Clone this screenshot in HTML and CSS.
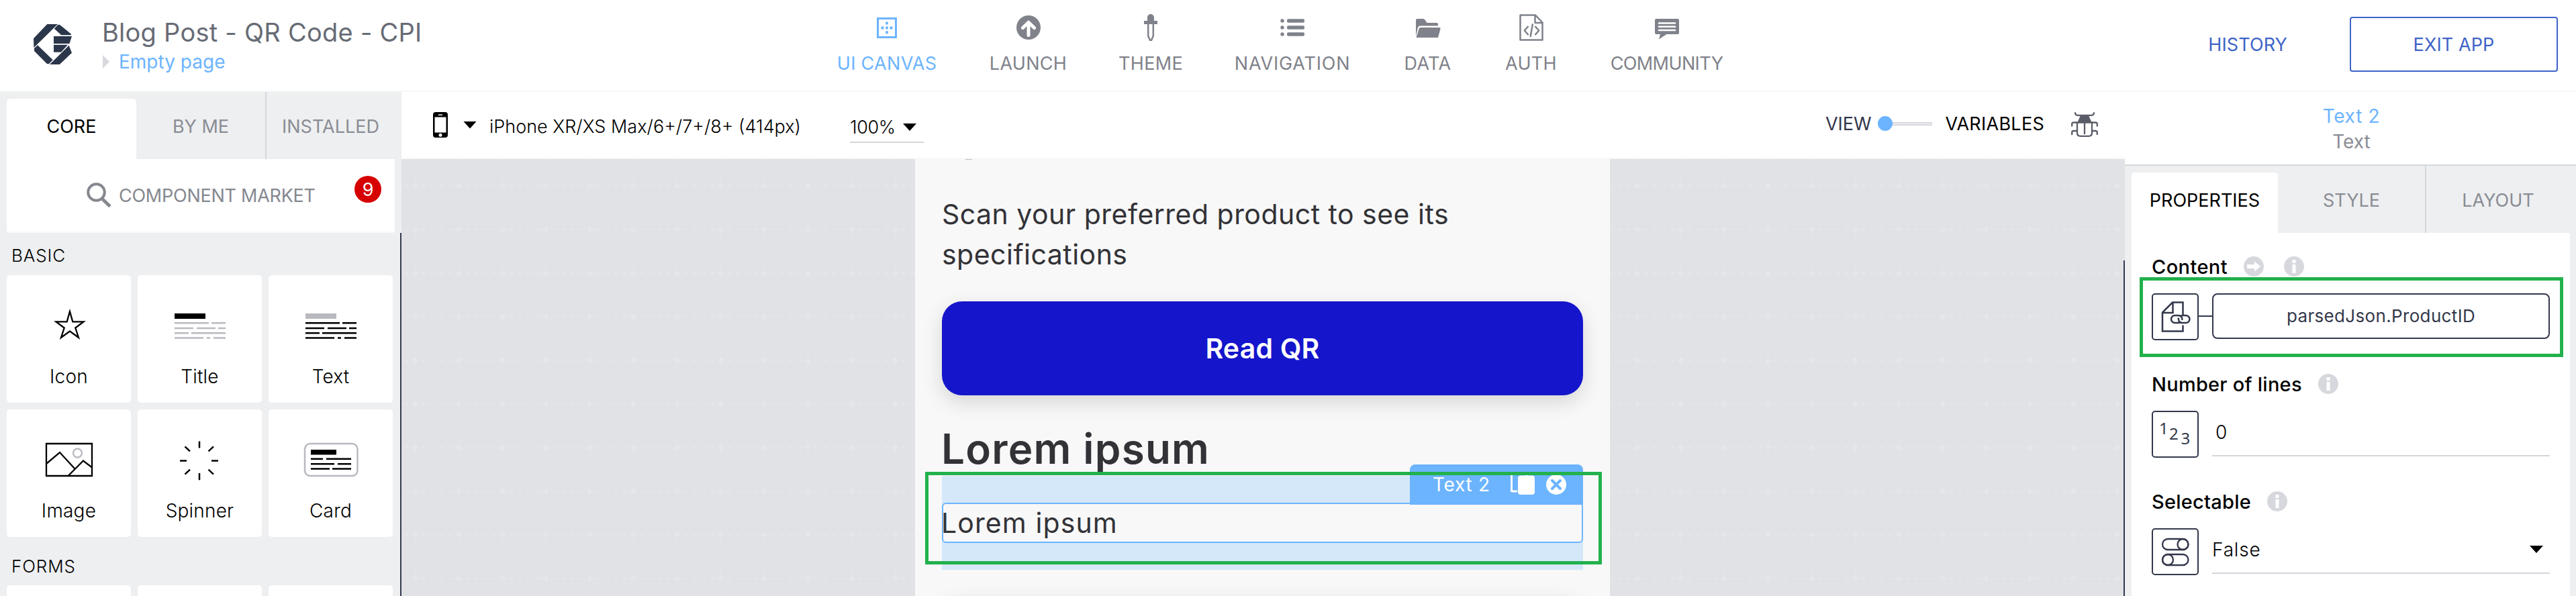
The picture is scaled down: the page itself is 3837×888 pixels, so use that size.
FILE: index.html
```
<!DOCTYPE html>
<html lang="en">
<head>
<meta charset="utf-8">
<title>Composer</title>
<link rel="stylesheet" href="styles.css">
</head>
<body>
<header class="topbar">
  <div class="brand">
    <svg class="logo" width="57" height="60" viewBox="0 0 57 60" fill="#2b364a"><path d="M20.3 0H36L.4 35 0 21.3z"/><path d="M30.8 6.700 36 1.200q1.500-1 3.500 0L56 14.700l-.4 1.600H41.300z"/><path d="M30 18h27l-3.500 11H30zM30 30.700h21L41 41.700H30z"/><path d="M52.700 31.700 57 42.700 38.800 60H24z"/><path d="M6 31.300 28.700 53.300 23 59q-1.600.8-3.600-.6L1 40v-4z"/></svg>
    <div class="brand-text">
      <div class="app-name">Blog Post - QR Code - CPI</div>
      <div class="page-name"><i class="crumb"></i><span>Empty page</span></div>
    </div>
  </div>
  <nav class="nav">
    <a class="nav-item active"><svg width="40" height="40" viewBox="0 0 40 40"><path fill="none" stroke="currentColor" stroke-width="3" d="M6.500 6.500h27v28h-27z"/><path fill="currentColor" d="M18.200 11.500h3.600v4h-3.600zM18.200 18.500h3.600v4h-3.600zM18.200 25.200h3.600v4h-3.600zM11.500 18.500h4v4h-4zM24.500 18.500h4v4h-4z"/></svg><span class="t3">UI CANVAS</span></a>
    <a class="nav-item"><svg width="40" height="40" viewBox="0 0 40 40"><circle cx="20" cy="20" r="18" fill="currentColor"/><path d="M20 31.500V13M11.500 20.500 20 12.200l8.500 8.300" fill="none" stroke="#fff" stroke-width="5" stroke-linecap="round" stroke-linejoin="round"/></svg><span class="t3">LAUNCH</span></a>
    <a class="nav-item"><svg width="40" height="40" viewBox="0 0 40 40"><path fill="currentColor" d="M15 10V5a5 5 0 0 1 10 0v5h5v5H10v-5z"/><path d="M16.200 15v17.500L19 39h2l2.800-6.500V15" fill="none" stroke="currentColor" stroke-width="2.500"/></svg><span class="t3">THEME</span></a>
    <a class="nav-item"><svg width="40" height="40" viewBox="0 0 40 40" fill="currentColor"><circle cx="5" cy="10" r="2.700"/><circle cx="5" cy="20" r="2.700"/><circle cx="5" cy="30" r="2.700"/><rect x="12" y="7.300" width="26" height="5.400" rx="2"/><rect x="12" y="17.300" width="26" height="5.400" rx="2"/><rect x="12" y="27.300" width="26" height="5.400" rx="2"/></svg><span class="t8">NAVIGATION</span></a>
    <a class="nav-item"><svg width="40" height="40" viewBox="0 0 40 40" fill="currentColor"><path d="M2 33V9q0-2 2-2h9q1.500 0 2.500 1.500l3 4.500H33q2 0 2 2v2.500H8q-2.500 0-3 2.500z"/><path d="M8.500 20H37q2 0 1.500 2l-3.500 13H2.500L6.700 21.500Q7 20 8.500 20z"/></svg><span class="t3">DATA</span></a>
    <a class="nav-item"><svg width="40" height="40" viewBox="0 0 40 40" fill="none" stroke="currentColor" stroke-width="2.500" stroke-linejoin="round"><path d="M3.500 1.500H26l10.500 11v26h-33zM25.500 1.500V13h11"/><path d="M15.500 18 9.800 24.500l5.700 6.500M25.500 18l5.700 6.500-5.700 6.500M22 14.500 18.500 34"/></svg><span class="t3">AUTH</span></a>
    <a class="nav-item"><svg width="40" height="40" viewBox="0 0 40 40"><path fill="currentColor" d="M4 7h32q2 0 2 2v19q0 2-2 2H19.500L8 37.500 10 30H4q-2 0-2-2V9q0-2 2-2z"/><path d="M8 13.500h24M8 18.800h24M8 24h24" stroke="#fff" stroke-width="2.600" stroke-linecap="round"/></svg><span class="t-6">COMMUNITY</span></a>
  </nav>
  <div class="actions"><a class="history">HISTORY</a><a class="exit">EXIT APP</a></div>
</header>

<main class="main">
  <aside class="library">
    <div class="tabs left-tabs"><div class="tab on">CORE</div><div class="tab">BY ME</div><div class="tab sep">INSTALLED</div></div>
    <div class="market">
      <svg width="38" height="38" viewBox="0 0 38 38" fill="none" stroke="#85888f"><circle cx="14.500" cy="14.500" r="12.300" stroke-width="4"/><path d="M23 24 35 35.500" stroke-width="5"/></svg>
      <span>COMPONENT MARKET</span><b class="badge">9</b>
    </div>
    <div class="lists">
      <h3 class="group">BASIC</h3>
      <div class="grid">
        <div class="comp"><svg width="185" height="130" viewBox="0 0 185 130"><path d="M94 54 98.300 69.400H114.500L102.300 78.500 107 93 94 83.500 81 93 85.700 78.500 73.500 69.400H89.700z" fill="none" stroke="#000" stroke-width="2.300"/></svg><span>Icon</span></div>
        <div class="comp"><svg width="185" height="130" viewBox="0 0 185 130"><path d="M55 57h46v8H55z"/><path d="M55 71.200h51m4 0h21M55 79h28m5 0h28m4 0h11M55 86.200h21m4 0h51M55 93.600h43m5 0h5m5 0h18" stroke="#b9bac0" stroke-width="2.500"/></svg><span>Title</span></div>
        <div class="comp"><svg width="185" height="130" viewBox="0 0 185 130"><path fill="#b9bac0" d="M55 57h46v8H55z"/><path d="M55 71.200h51m4 0h21M55 79h28m5 0h28m4 0h11M55 86.200h21m4 0h51M55 93.600h43m5 0h5m5 0h18" stroke="#000" stroke-width="2.500"/></svg><span>Text</span></div>
        <div class="comp"><svg width="185" height="130" viewBox="0 0 185 130" fill="none" stroke="#000" stroke-width="2.300"><circle cx="105.500" cy="65" r="6.500" stroke="#b9bac0"/><path d="M59 51h68v48H59zM59 81l20-17 22.500 24.500M92 98.500 114 76.500l13 10"/></svg><span>Image</span></div>
        <div class="comp"><svg width="185" height="130" viewBox="0 0 185 130"><path d="M92 47.400v10.200M92 95v10.200M63 76.600h10M110 76.600h10M70.500 55.300l7.500 7M113 55.300l-7.500 7M70.500 96.600l7.500-7M113 96.600l-7.500-7" stroke="#000" stroke-width="2.500"/></svg><span>Spinner</span></div>
        <div class="comp"><svg width="185" height="130" viewBox="0 0 185 130"><rect x="54" y="51" width="78.500" height="48" rx="8" fill="none" stroke="#b9bac0" stroke-width="2.500"/><path d="M63 60h38v7.600H63z"/><path d="M63 73.700h18m5 0h37M63 81.300h35m5 0h20M63 88.600h28m4 0h28" stroke="#000" stroke-width="2.500"/></svg><span>Card</span></div>
      </div>
      <h3 class="group forms">FORMS</h3>
      <div class="grid"><div class="comp"></div><div class="comp"></div><div class="comp"></div></div>
    </div>
  </aside>

  <section class="stage">
    <div class="toolbar">
      <svg class="phone" width="22" height="38" viewBox="0 0 22 38"><rect width="22" height="38" rx="4"/><path fill="#fff" d="M2.500 7.500h17v23h-17z"/><path d="M8 4.200h6" stroke="#fff" stroke-width="1.500"/><circle cx="11" cy="34.200" r="2.500" fill="#fff"/></svg>
      <i class="caret"></i>
      <span class="device">iPhone XR/XS Max/6+/7+/8+ (414px)</span>
      <span class="zoom"><span class="zoom-value">100%</span><i class="caret"></i></span>
      <span class="view">VIEW</span>
      <span class="toggle"><i class="knob"></i><i class="track"></i></span>
      <span class="variables">VARIABLES</span>
      <svg class="bug" width="40" height="38" viewBox="0 0 40 38" fill="none" stroke="#5a5d68" stroke-width="2.300"><path d="M6 .3v1Q6.500 4.800 10 4.800H30Q33.500 4.800 34 1.300v-1"/><path d="M14 5h12l5 11H9z" fill="#5a5d68" stroke="none"/><path d="M9 15.500h22V31q0 4.800-5 4.800H14q-5 0-5-4.800zM20 15.500V33"/><path d="M1.200 21.500V18q0-2.500 2.500-2.500H9M1.200 34v-3.500Q1.200 28 3.700 28H9M38.800 21.500V18q0-2.500-2.500-2.500H31M38.800 34v-3.500q0-2.500-2.500-2.500H31"/></svg>
    </div>
    <div class="canvas">
      <svg class="dots" width="2567" height="651"><defs><pattern id="g" x="-12" y="7.500" width="65" height="65" patternUnits="userSpaceOnUse"><g fill="none" stroke="#e7e7ea"><path d="M-9.500 32.500H65" stroke-width="1.800" stroke-dasharray="6 7"/><path d="M32.500-9.500V65" stroke-width="1" stroke-dasharray="6 7"/><path d="M28 32.500h9M32.500 28v9" stroke-width="2.500"/></g></pattern></defs><rect width="2567" height="651" fill="url(#g)"/></svg>
      <div class="screen">
        <i class="cutoff"></i>
        <p class="intro">Scan your preferred product to see its<br>specifications</p>
        <div class="button">Read QR</div>
        <h1 class="heading">Lorem ipsum</h1>
        <div class="selected">
          <div class="field-text">Lorem ipsum</div>
          <div class="tag"><span>Text 2</span>
            <svg width="36" height="36" viewBox="0 0 36 36"><path d="M1.500 29V2.500h22.500V6M1.500 28H10" fill="none" stroke="#fff" stroke-width="3"/><rect x="11" y="4.500" width="25" height="28.500" rx="4" fill="#fff"/></svg>
            <svg width="30" height="30" viewBox="0 0 30 30"><circle cx="15" cy="15" r="15" fill="#fff"/><path d="m9 9 12 12M21 9 9 21" stroke="#6cb4fe" stroke-width="4" stroke-linecap="round"/></svg>
          </div>
          <i class="mark mark-canvas"></i>
        </div>
        <div class="button next"></div>
      </div>
      <i class="divider"></i>
    </div>
  </section>

  <aside class="inspector">
    <div class="subject"><div class="subject-name">Text 2</div><div class="subject-type">Text</div></div>
    <div class="tabs right-tabs"><div class="tab on">PROPERTIES</div><div class="tab">STYLE</div><div class="tab sep">LAYOUT</div></div>
    <div class="props">
      <div class="prop">
        <div class="label content"><span>Content</span><svg width="30" height="30" viewBox="0 0 30 30"><circle cx="15" cy="15" r="15" fill="#d7d8dd"/><path fill="#fff" d="M5 12h11V7.500l9 7.500-9 7.500V18H5z"/></svg><svg class="second" width="30" height="30" viewBox="0 0 30 30"><circle cx="15" cy="15" r="15" fill="#d7d8dd"/><path fill="#fff" d="M12.500 5h5v5h-5zM12.500 12h5v13h-5z"/></svg></div>
        <div class="control">
          <div class="kind"><svg width="70" height="70" viewBox="0 0 70 70" fill="none" stroke="#33384b" stroke-width="2.500"><path d="M46.500 32V13.500H31L16 28.500v28h30.500V47.500M31.500 13.500v15.500H16"/><path d="M43 42.500q-1.500 1.500-3.500 1.500h-5a5.500 5.500 0 0 1 0-11H40a5.500 5.500 0 0 1 5.300 7"/><path d="M42 34.500q1.500-1.500 3.500-1.500h5.500a5.500 5.500 0 0 1 0 11h-5.500a5.500 5.500 0 0 1-5.300-7.500"/></svg></div>
          <i class="link"></i><div class="binding">parsedJson.ProductID</div>
        </div>
        <i class="mark mark-prop"></i>
      </div>
      <div class="prop">
        <div class="label lines"><span>Number of lines</span><svg width="30" height="30" viewBox="0 0 30 30"><circle cx="15" cy="15" r="15" fill="#d7d8dd"/><path fill="#fff" d="M12.500 5h5v5h-5zM12.500 12h5v13h-5z"/></svg></div>
        <div class="control">
          <div class="kind"><svg class="digits" width="70" height="70" viewBox="0 0 70 70"><text x="11" y="35">1</text><text x="26" y="43">2</text><text x="43.500" y="50">3</text></svg></div>
          <div class="input number">0</div>
        </div>
      </div>
      <div class="prop">
        <div class="label"><span>Selectable</span><svg width="30" height="30" viewBox="0 0 30 30"><circle cx="15" cy="15" r="15" fill="#d7d8dd"/><path fill="#fff" d="M12.500 5h5v5h-5zM12.500 12h5v13h-5z"/></svg></div>
        <div class="control">
          <div class="kind"><svg width="70" height="70" viewBox="0 0 70 70" fill="none" stroke="#33384b" stroke-width="2.300"><rect x="16" y="16" width="38.500" height="16" rx="8"/><circle cx="46.500" cy="24" r="8"/><rect x="16" y="39" width="38.500" height="16" rx="8"/><circle cx="24" cy="47" r="8"/></svg></div>
          <div class="input"><span>False</span><i class="caret"></i></div>
        </div>
      </div>
    </div>
  </aside>
</main>
</body>
</html>
```
FILE: styles.css
```
* { box-sizing: border-box; margin: 0; padding: 0; }
body {
  width: 3837px;
  height: 888px;
  overflow: hidden;
  background: #fff;
  color: #000;
  font-family: Inter, "Liberation Sans", sans-serif;
  font-size: 27px;
  white-space: nowrap;
}
svg { display: block; flex: none; }
i { display: block; flex: none; }

/* Top bar */
.topbar { display: flex; height: 137px; border-bottom: 2px solid #f7f8f8; }
.brand { display: flex; width: 1248px; padding: 26px 0 0 50px; }
.logo { margin: 10px 45px 0 0; }
.app-name { font-size: 38px; line-height: 44px; color: #676b75; letter-spacing: .25px; }
.page-name { display: flex; align-items: center; gap: 14px; font-size: 28px; line-height: 44px; color: #6cb4fe; }
.crumb { border: 10px solid transparent; border-left-color: #d7d9dd; border-right: 0; margin-left: 1px; }
.nav {
  display: grid;
  grid-template-columns: 146px 111px 90px 168px 71px 73px 167px;
  column-gap: 82px;
  padding-top: 21px;
  color: #7f828a;
}
.nav-item { display: flex; flex-direction: column; align-items: center; gap: 17px; line-height: 34px; }
.nav-item.active { color: #6cb4fe; }
.t3 { letter-spacing: .3px; }
.t8 { letter-spacing: .8px; }
.t-6 { letter-spacing: -.6px; }
.actions { display: flex; align-items: center; margin-left: auto; padding: 0 27px 3px 0; color: #3e64c8; letter-spacing: .1px; }
.history { margin-right: 93px; }
.exit { width: 310px; height: 82px; border: 2px solid #3e64c8; border-radius: 4px; line-height: 79px; text-align: center; }

.main { display: flex; height: 751px; }

/* Tabs */
.tabs { display: flex; height: 100px; padding-left: 10px; background: #eeeff1; color: #8a8d94; line-height: 24px; text-align: center; }
.tab { padding-top: 40px; }
.tab.on { margin-top: 10px; padding-top: 30px; background: #fff; color: #000; border-radius: 5px 5px 0 0; }
.tab.sep { border-left: 2px solid #d5d8da; }
.left-tabs .tab { width: 192px; }
.left-tabs .tab.on, .left-tabs .tab.sep { width: 193px; }
.right-tabs .tab { width: 219px; }
.right-tabs .tab.on { width: 218px; }
.right-tabs .tab.sep { width: 216px; }

/* Component library */
.library { width: 598px; background: #eeeff1; }
.market {
  position: relative;
  display: flex;
  align-items: center;
  gap: 10px;
  width: 578px;
  height: 110px;
  margin-left: 10px;
  padding-left: 119px;
  border-bottom: 2px solid #f7f8f8;
  background: #fff;
  color: #85888f;
  letter-spacing: -.25px;
}
.badge {
  position: absolute;
  left: 518px;
  top: 25px;
  width: 40px;
  height: 40px;
  border-radius: 50%;
  background: #d60000;
  color: #fff;
  font-size: 27px;
  font-weight: 400;
  line-height: 42px;
  text-align: center;
}
.lists { height: 541px; border-right: 2px solid #333a4f; overflow: hidden; }
.group { height: 63px; padding-left: 17px; font-size: 26px; font-weight: 300; line-height: 67px; letter-spacing: .9px; }
.forms { height: 72px; line-height: 87px; }
.grid { display: grid; grid-template-columns: repeat(3, 185px); grid-auto-rows: 190px; gap: 10px; padding-left: 10px; }
.comp { border-radius: 5px; background: #fff; font-size: 28px; font-weight: 300; line-height: 30px; text-align: center; letter-spacing: .2px; }
.comp span { display: block; margin-top: 6px; }

/* Stage */
.stage { width: 2567px; }
.toolbar { display: flex; align-items: center; height: 100px; padding: 0 40px 0 47px; border-bottom: 2px solid #f7f8f8; }
.caret { width: 20px; height: 11px; background: #000; clip-path: polygon(0 0, 100% 0, 50% 100%); }
.phone { margin-right: 23px; }
.device { width: 537px; margin: 4px 0 0 19px; font-size: 27px; font-weight: 300; letter-spacing: 0; }
.zoom { display: flex; align-items: center; justify-content: space-between; width: 110px; height: 44px; margin-top: 9px; padding: 0 11px 0 0; border-bottom: 2px solid #d5d6dc; font-size: 27px; font-weight: 300; letter-spacing: -.4px; }
.view { margin: -3px 10px 0 auto; color: #33384b; letter-spacing: -.1px; }
.toggle { display: flex; align-items: center; width: 81px; margin-top: -4px; }
.knob { width: 22px; height: 22px; border-radius: 50%; background: #6cb4fe; }
.track { width: 59px; height: 5px; border: 1px solid #d5d6dc; border-width: 2px 1px; }
.variables { margin: -3px 40px 0 19px; letter-spacing: .27px; }
.canvas { position: relative; height: 651px; overflow: hidden; background: #e1e2e6; }
.dots { position: absolute; inset: 0; }
.divider { position: absolute; right: 0; top: 151px; width: 2px; height: 500px; background: #333a4f; }
.screen { position: relative; width: 1035px; height: 651px; margin-left: 765px; padding: 52px 40px 0; background: #f8f8f8; color: #323237; overflow: hidden; }
.cutoff { position: absolute; left: 75px; top: 0; width: 10px; height: 1px; background: #bdbdc0; }
.intro { font-size: 41px; line-height: 60px; letter-spacing: .48px; }
.button { height: 140px; margin-top: 40px; border-radius: 30px; background: #1515cc; box-shadow: 0 10px 30px rgba(0, 0, 0, .14); color: #fff; font-size: 41px; font-weight: 600; line-height: 140px; text-align: center; letter-spacing: .2px; }
.heading { margin-top: 40px; font-size: 62px; font-weight: 600; line-height: 80px; letter-spacing: 1.2px; margin-left: -1px; }
.selected { position: relative; height: 140px; padding: 40px 0; background: #d5e8fa; }
.field-text { height: 60px; border: 2px solid #6cb4fe; border-radius: 6px; background: #f8f8f8; font-size: 41px; line-height: 56px; letter-spacing: 1.1px; text-indent: -3px; }
.tag {
  position: absolute;
  right: 0;
  top: -17px;
  display: flex;
  align-items: center;
  width: 258px;
  height: 60px;
  padding-left: 34px;
  border-radius: 8px 8px 0 0;
  background: #6cb4fe;
  color: #fff;
  font-size: 28px;
  letter-spacing: .7px;
}
.tag span { width: 116px; }
.tag svg + svg { margin-left: 17px; }
.next { margin-top: 40px; }
.mark { position: absolute; border: 5px solid #22b14c; }
.mark-canvas { left: -25px; top: -6px; width: 1008px; height: 138px; }

/* Inspector */
.inspector { width: 672px; background: #eeeff1; }
.subject { height: 110px; padding-top: 17px; border-bottom: 2px solid #d5d8da; background: #fff; font-size: 28px; line-height: 38px; text-align: center; padding-left: 3px; }
.subject-name { color: #6cb4fe; letter-spacing: .7px; }
.subject-type { color: #8a8d94; }
.props { display: flex; flex-direction: column; gap: 40px; width: 653px; height: 541px; margin-left: 10px; padding: 25px 30px 0; background: #fff; }
.prop { position: relative; height: 135px; }
.label { display: flex; align-items: center; gap: 24px; height: 50px; font-size: 29px; font-weight: 500; letter-spacing: .25px; }
.second { margin-left: 6px; }
.content { letter-spacing: .4px; }
.control { display: flex; margin-top: 15px; }
.kind { width: 70px; height: 70px; margin-right: 20px; border: 2px solid #33384b; border-radius: 5px; }
.kind svg { margin: -2px; }
.digits { fill: #33384b; font-family: "Noto Sans", sans-serif; font-size: 24px; }
.link { width: 20px; height: 2px; margin: 33px 0 0 -20px; background: #33384b; }
.binding { width: 503px; height: 68px; border: 2px solid #33384b; border-radius: 8px; color: #33384b; font-size: 26px; line-height: 64px; text-align: center; letter-spacing: .34px; }
.input { display: flex; align-items: center; justify-content: space-between; width: 503px; height: 68px; padding: 0 10px 3px 0; border-bottom: 2px solid #d5d6dc; font-size: 28px; font-weight: 300; letter-spacing: .8px; }
.number { padding-left: 5px; }
.mark-prop { left: -18px; top: 41px; width: 631px; height: 119px; }
```
